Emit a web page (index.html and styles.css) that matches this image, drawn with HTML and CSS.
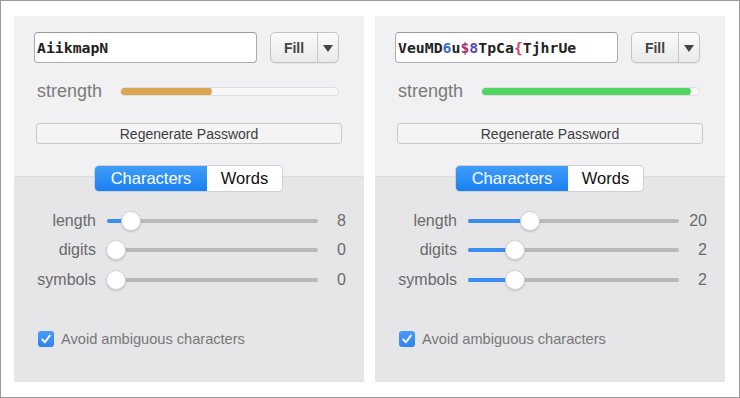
FILE: index.html
```html
<!DOCTYPE html>
<html>
<head>
<meta charset="utf-8">
<link rel="stylesheet" href="styles.css">
</head>
<body>
<div class="frame">
  <div class="panel">
    <div class="top-row">
      <div class="pw-field"><span class="pw">AiikmapN</span></div>
      <div class="fill-btn"><span class="fill-label">Fill</span><span class="fill-arrow"></span></div>
    </div>
    <div class="strength-row">
      <span class="strength-label">strength</span>
      <div class="strength-bar"><div class="strength-fill orange" style="width:41.5%"></div></div>
    </div>
    <div class="regen">Regenerate Password</div>
    <div class="segmented">
      <div class="seg seg-on">Characters</div>
      <div class="seg seg-off">Words</div>
    </div>
    <div class="sliders">
      <div class="slider-row">
        <span class="s-label">length</span>
        <div class="track"><div class="track-fill" style="width:calc(10px + 7.4% * 0.905)"></div><div class="knob" style="left:calc(7.4% * 0.905)"></div></div>
        <span class="s-value">8</span>
      </div>
      <div class="slider-row">
        <span class="s-label">digits</span>
        <div class="track"><div class="track-fill" style="width:0"></div><div class="knob" style="left:-1px"></div></div>
        <span class="s-value">0</span>
      </div>
      <div class="slider-row">
        <span class="s-label">symbols</span>
        <div class="track"><div class="track-fill" style="width:0"></div><div class="knob" style="left:-1px"></div></div>
        <span class="s-value">0</span>
      </div>
    </div>
    <div class="check-row">
      <span class="checkbox"><svg viewBox="0 0 16 16" width="16" height="16"><path d="M4.2 8.4 L6.9 11.3 L11.8 4.6" fill="none" stroke="#fff" stroke-width="1.9" stroke-linecap="round" stroke-linejoin="round"/></svg></span>
      <span class="check-label">Avoid ambiguous characters</span>
    </div>
  </div>

  <div class="panel">
    <div class="top-row">
      <div class="pw-field"><span class="pw">VeuMD<span class="c-blue">6</span>u<span class="c-purple">$</span><span class="c-violet">8</span>TpCa<span class="c-red">{</span>TjhrUe</span></div>
      <div class="fill-btn"><span class="fill-label">Fill</span><span class="fill-arrow"></span></div>
    </div>
    <div class="strength-row">
      <span class="strength-label">strength</span>
      <div class="strength-bar"><div class="strength-fill green" style="width:96%"></div></div>
    </div>
    <div class="regen">Regenerate Password</div>
    <div class="segmented">
      <div class="seg seg-on">Characters</div>
      <div class="seg seg-off">Words</div>
    </div>
    <div class="sliders">
      <div class="slider-row">
        <span class="s-label">length</span>
        <div class="track"><div class="track-fill" style="width:calc(10px + 27% * 0.905)"></div><div class="knob" style="left:calc(27% * 0.905)"></div></div>
        <span class="s-value">20</span>
      </div>
      <div class="slider-row">
        <span class="s-label">digits</span>
        <div class="track"><div class="track-fill" style="width:calc(10px + 19.5% * 0.905)"></div><div class="knob" style="left:calc(19.5% * 0.905)"></div></div>
        <span class="s-value">2</span>
      </div>
      <div class="slider-row">
        <span class="s-label">symbols</span>
        <div class="track"><div class="track-fill" style="width:calc(10px + 19.5% * 0.905)"></div><div class="knob" style="left:calc(19.5% * 0.905)"></div></div>
        <span class="s-value">2</span>
      </div>
    </div>
    <div class="check-row">
      <span class="checkbox"><svg viewBox="0 0 16 16" width="16" height="16"><path d="M4.2 8.4 L6.9 11.3 L11.8 4.6" fill="none" stroke="#fff" stroke-width="1.9" stroke-linecap="round" stroke-linejoin="round"/></svg></span>
      <span class="check-label">Avoid ambiguous characters</span>
    </div>
  </div>
</div>
</body>
</html>
```

FILE: styles.css
```css
* { box-sizing: border-box; }
html, body { margin: 0; padding: 0; background: #fff; }
body { font-family: "Liberation Sans", Arial, sans-serif; }

.frame {
  width: 740px;
  height: 398px;
  border: 1px solid #9a9a9a;
  background: #fff;
  display: flex;
  gap: 11px;
  padding: 15px 0 0 13px;
}

.panel {
  width: 350px;
  height: 366px;
  background: linear-gradient(to bottom, #f1f1f3 0, #f1f1f3 160px, #dcdcde 160px, #dcdcde 161px, #e6e6e8 161px);
  display: flex;
  flex-direction: column;
  padding-top: 16px;
}

.top-row {
  display: flex;
  height: 31px;
  margin-left: 20px;
}

.pw-field {
  width: 223px;
  height: 31px;
  background: #fff;
  border: 1px solid #acacac;
  border-top-color: #9a9a9a;
  border-radius: 4px;
  display: flex;
  align-items: center;
  padding-left: 2px;
}

.pw {
  font-family: "DejaVu Sans Mono", "Liberation Mono", monospace;
  font-weight: bold;
  font-size: 14.8px;
  color: #222;
}
.c-blue { color: #3d6cc4; }
.c-purple { color: #a8336b; }
.c-violet { color: #5a4cb4; }
.c-red { color: #d9415f; }

.fill-btn {
  margin-left: 13px;
  width: 69px;
  height: 31px;
  border: 1px solid #c4c4c4;
  border-radius: 5px;
  background: linear-gradient(to bottom, #fbfbfb, #e9e9e9);
  display: flex;
  box-shadow: 0 1px 0 rgba(0,0,0,0.05);
}
.fill-label {
  width: 47px;
  border-right: 1px solid #c8c8c8;
  display: flex;
  align-items: center;
  justify-content: center;
  font-size: 14px;
  font-weight: bold;
  color: #444;
}
.fill-arrow {
  flex: 1;
  display: flex;
  align-items: center;
  justify-content: center;
}
.fill-arrow::before {
  content: "";
  width: 0;
  height: 0;
  border-left: 5px solid transparent;
  border-right: 5px solid transparent;
  border-top: 7px solid #444;
  margin-top: 1px;
}

.strength-row {
  display: flex;
  align-items: center;
  height: 20px;
  margin-top: 18px;
  margin-left: 23px;
}
.strength-label {
  width: 83px;
  font-size: 18px;
  color: #7a7a7a;
  line-height: 20px;
  margin-top: -1px;
}
.strength-bar {
  width: 219px;
  height: 9px;
  border-radius: 5px;
  background: #f7f7f7;
  border: 1px solid #dedede;
  overflow: hidden;
}
.strength-fill {
  height: 100%;
  border-radius: 5px;
  margin-top: -1px;
  margin-left: -1px;
  box-sizing: content-box;
  padding: 1px;
}
.strength-fill.orange { background: #dba552; }
.strength-fill.green { background: #52d462; }

.regen {
  margin-top: 22px;
  margin-left: 22px;
  width: 306px;
  height: 21px;
  border: 1px solid #c9c9c9;
  border-radius: 3px;
  background: #f4f4f5;
  display: flex;
  align-items: center;
  justify-content: center;
  font-size: 14px;
  color: #3c3c3c;
}

.segmented {
  margin-top: 22px;
  margin-left: 81px;
  width: 187px;
  height: 25px;
  display: flex;
  border-radius: 4px;
  box-shadow: 0 0 0 1px #d0d0d2, 0 1px 1px rgba(0,0,0,0.08);
  overflow: hidden;
}
.seg {
  display: flex;
  align-items: center;
  justify-content: center;
  font-size: 16.5px;
}
.seg-on {
  width: 112px;
  color: #fff;
  background: linear-gradient(to bottom, #3f9cf8, #1a80f1);
}
.seg-off {
  flex: 1;
  background: #fff;
  color: #111;
}

.sliders {
  margin-top: 15px;
  display: flex;
  flex-direction: column;
}
.slider-row {
  display: grid;
  grid-template-columns: 93px 211px 28px;
  align-items: center;
  height: 29.5px;
}
.s-label {
  text-align: right;
  padding-right: 11px;
  font-size: 16px;
  color: #6a6a6a;
}
.track {
  position: relative;
  height: 4px;
  border-radius: 2px;
  background: #b9b9bb;
}
.track-fill {
  height: 4px;
  border-radius: 2px;
  background: #3a8ef2;
}
.knob {
  position: absolute;
  top: -8px;
  width: 20px;
  height: 20px;
  border-radius: 50%;
  background: #fff;
  border: 1px solid #d3d3d5;
  box-shadow: 0 1px 2px rgba(0,0,0,0.18);
}
.s-value {
  text-align: right;
  font-size: 16px;
  color: #6a6a6a;
}

.check-row {
  margin-top: 34px;
  margin-left: 24px;
  height: 20px;
  display: flex;
  align-items: center;
  gap: 7px;
}
.checkbox {
  width: 16px;
  height: 16px;
  border-radius: 3px;
  background: linear-gradient(to bottom, #4a9bf6, #2d84ee);
  display: flex;
}
.check-label {
  font-size: 14.6px;
  color: #777;
}
```
